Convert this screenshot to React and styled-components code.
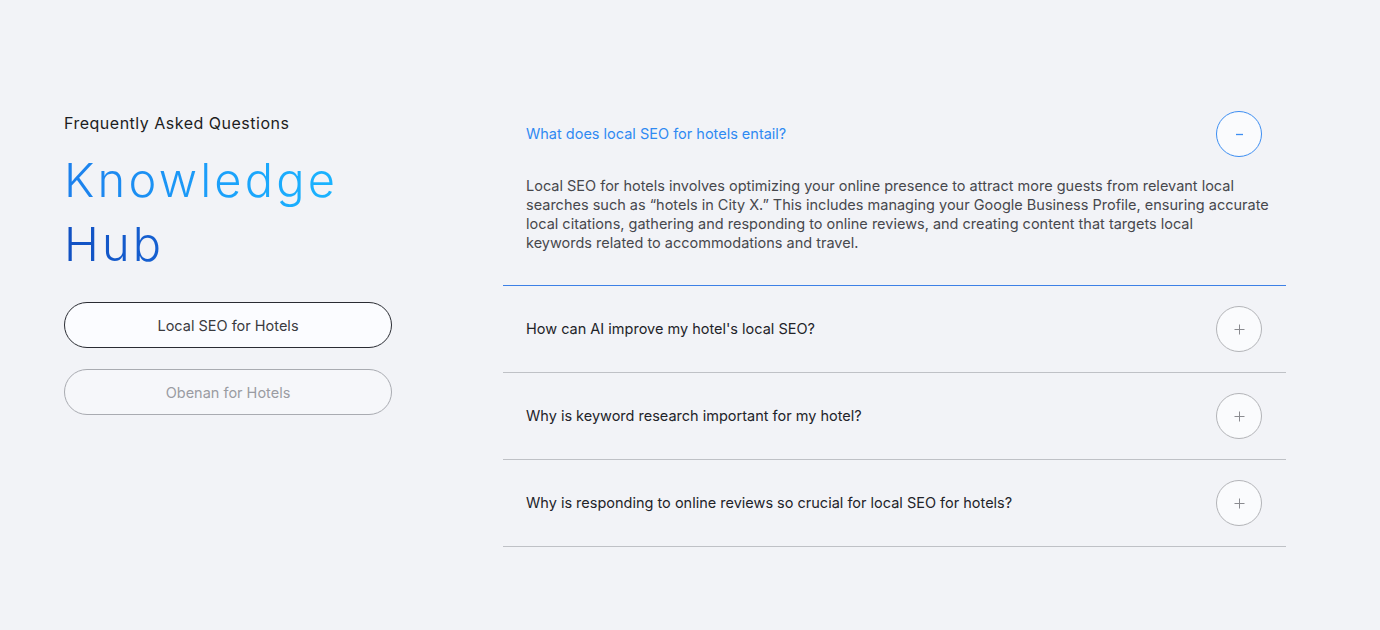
import React, { useState } from "react";
import styled, { createGlobalStyle } from "styled-components";

const Global = createGlobalStyle`
  html, body { margin: 0; padding: 0; background: #f2f3f7; }
  body { font-family: Inter, "Noto Sans", sans-serif; -webkit-font-smoothing: antialiased; }
`;

const Page = styled.main`
  min-height: 630px;
  display: flex;
  align-items: flex-start;
  gap: 111px;
  padding: 90px 94px 0 64px;
  box-sizing: border-box;
`;

const Side = styled.section`
  width: 328px;
  flex: none;
  padding-top: 23px;
`;

const Eyebrow = styled.div`
  font-size: 16px;
  line-height: 20px;
  color: #1d1d22;
  letter-spacing: 0.5px;
`;

const Title = styled.h2`
  margin: 15px 0 0;
  display: flex;
  flex-direction: column;
  align-items: flex-start;
  font-weight: 300;
  font-size: 47px;
  line-height: 64px;
  letter-spacing: 3.2px;
`;

const TitleLine = styled.span`
  display: block;
  background: ${(p) => p.$grad};
  -webkit-background-clip: text;
  background-clip: text;
  color: transparent;
`;

const Tabs = styled.div`
  margin-top: 26px;
  display: flex;
  flex-direction: column;
  gap: 21px;
`;

const Tab = styled.button`
  height: 46px;
  width: 100%;
  border-radius: 23px;
  border: 1px solid ${(p) => (p.$active ? "#2a2c33" : "#a9abb1")};
  background: ${(p) => (p.$active ? "#fbfcff" : "#f6f7fa")};
  color: ${(p) => (p.$active ? "#3a3b40" : "#9a9ca2")};
  font-family: inherit;
  font-size: 14.5px;
  cursor: pointer;
`;

const List = styled.section`
  flex: 1;
  min-width: 0;
`;

const Item = styled.div`
  border-bottom: 1px solid ${(p) => (p.$open ? "#3d80e6" : "#bfc1c6")};
  padding: ${(p) => (p.$open ? "21px 24px 33px 23px" : "20px 24px 20px 23px")};
`;

const Row = styled.div`
  display: flex;
  align-items: center;
  justify-content: space-between;
  gap: 20px;
`;

const Question = styled.div`
  font-size: 14.5px;
  line-height: 20px;
  color: ${(p) => (p.$open ? "#2f8af2" : "#222329")};
`;

const Toggle = styled.button`
  width: 46px;
  height: 46px;
  flex: none;
  border-radius: 50%;
  border: 1px solid ${(p) => (p.$open ? "#3d8ef2" : "#b3b4b8")};
  background: #fafbfd;
  display: flex;
  align-items: center;
  justify-content: center;
  padding: 0;
  cursor: pointer;
`;

const Answer = styled.p`
  margin: 19px -20px 0 0;
  font-size: 14.5px;
  line-height: 19px;
  color: #47484d;
`;

const AnswerLine = styled.span`
  display: block;
  white-space: nowrap;
`;

const Icon = ({ open }) =>
  open ? (
    <svg width="11" height="11" viewBox="0 0 11 11">
      <line x1="2" y1="5.5" x2="9" y2="5.5" stroke="#3d8ef2" strokeWidth="1.3" />
    </svg>
  ) : (
    <svg width="11" height="11" viewBox="0 0 11 11">
      <line x1="0.5" y1="5.5" x2="10.5" y2="5.5" stroke="#8a8b90" strokeWidth="1" />
      <line x1="5.5" y1="0.5" x2="5.5" y2="10.5" stroke="#8a8b90" strokeWidth="1" />
    </svg>
  );

const faqs = [
  {
    q: "What does local SEO for hotels entail?",
    a: [
      "Local SEO for hotels involves optimizing your online presence to attract more guests from relevant local",
      "searches such as \u201chotels in City X.\u201d This includes managing your Google Business Profile, ensuring accurate",
      "local citations, gathering and responding to online reviews, and creating content that targets local",
      "keywords related to accommodations and travel.",
    ],
  },
  { q: "How can AI improve my hotel's local SEO?", a: null },
  { q: "Why is keyword research important for my hotel?", a: null },
  { q: "Why is responding to online reviews so crucial for local SEO for hotels?", a: null },
];

export default function App() {
  const [open, setOpen] = useState(0);
  const [tab, setTab] = useState(0);
  return (
    <>
      <Global />
      <Page>
        <Side>
          <Eyebrow>Frequently Asked Questions</Eyebrow>
          <Title>
            <TitleLine $grad="linear-gradient(90deg, #1c7fec 0%, #1ba2fb 60%, #1ab4ff 100%)">Knowledge</TitleLine>
            <TitleLine $grad="linear-gradient(90deg, #1150c2 0%, #1661d2 100%)">Hub</TitleLine>
          </Title>
          <Tabs>
            {["Local SEO for Hotels", "Obenan for Hotels"].map((t, i) => (
              <Tab key={t} $active={tab === i} onClick={() => setTab(i)}>
                {t}
              </Tab>
            ))}
          </Tabs>
        </Side>
        <List>
          {faqs.map((f, i) => {
            const isOpen = open === i;
            return (
              <Item key={f.q} $open={isOpen}>
                <Row>
                  <Question $open={isOpen}>{f.q}</Question>
                  <Toggle $open={isOpen} onClick={() => setOpen(isOpen ? -1 : i)} aria-label="toggle">
                    <Icon open={isOpen} />
                  </Toggle>
                </Row>
                {isOpen && f.a && (
                  <Answer>
                    {f.a.map((line) => (
                      <AnswerLine key={line}>{line}</AnswerLine>
                    ))}
                  </Answer>
                )}
              </Item>
            );
          })}
        </List>
      </Page>
    </>
  );
}
